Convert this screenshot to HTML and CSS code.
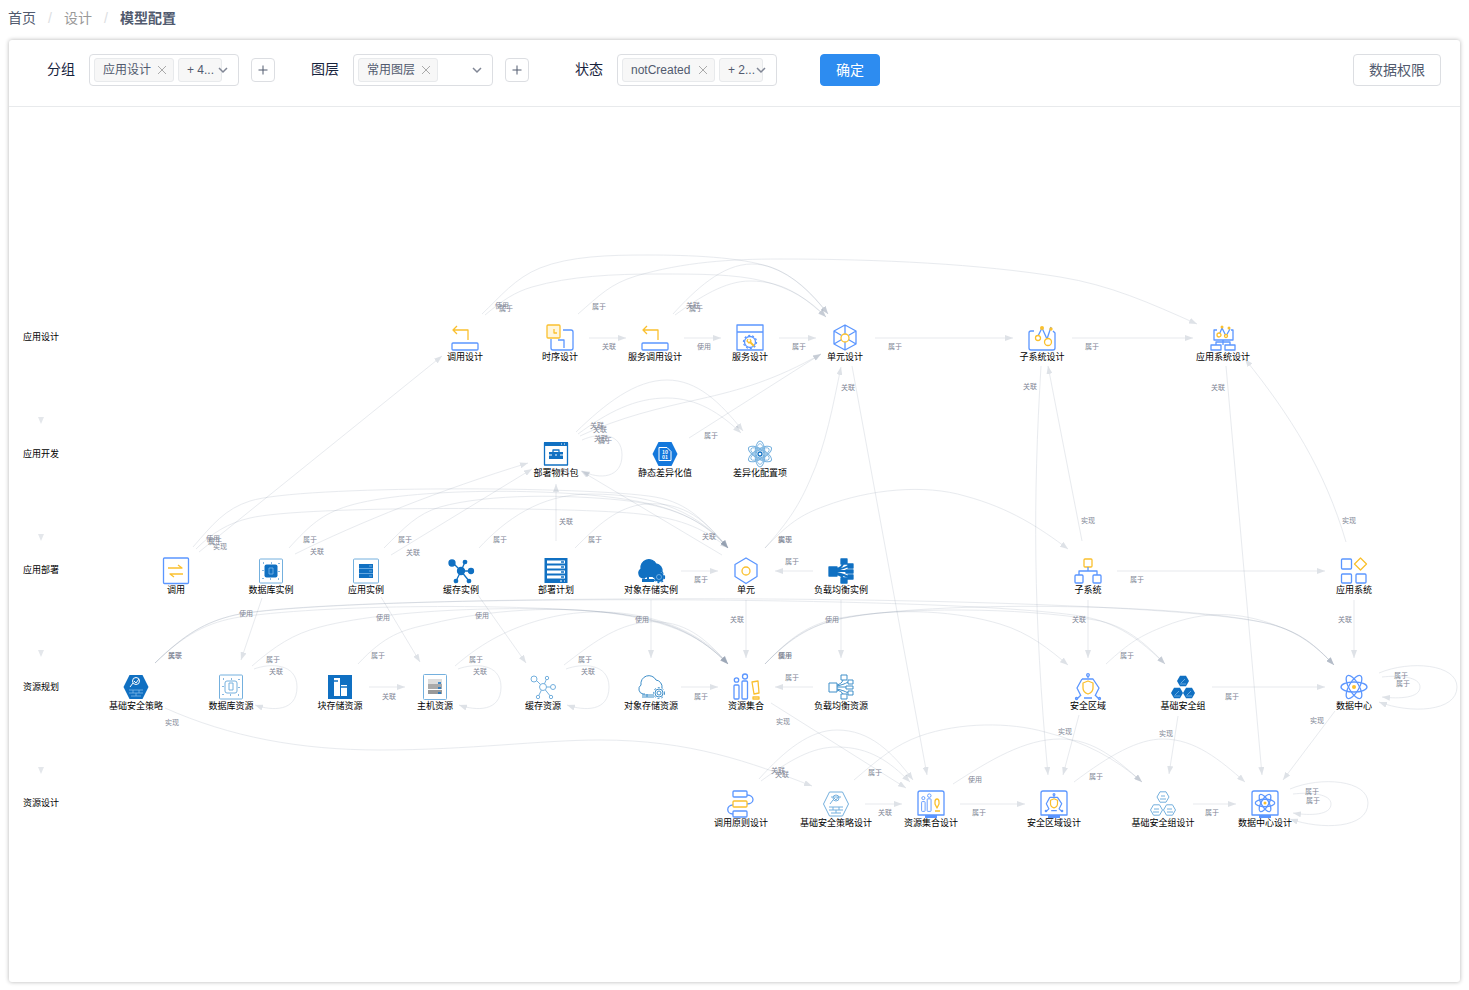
FILE: index.html
```html
<!DOCTYPE html>
<html lang="zh-CN">
<head>
<meta charset="utf-8">
<meta name="viewport" content="width=device-width, initial-scale=1">
<title>模型配置</title>
<link rel="stylesheet" href="styles.css">
</head>
<body>
<nav class="breadcrumb" aria-label="breadcrumb">
  <a href="#home">首页</a><span class="sep">/</span><span class="mid">设计</span><span class="sep">/</span><strong>模型配置</strong>
</nav>
<main class="card">
  <header class="toolbar">
    <div class="field first">
      <span class="field-label" id="l-group">分组</span>
      <div class="select select-group" role="group" aria-labelledby="l-group">
        <span class="tag">应用设计<button class="close" aria-label="移除应用设计"><svg viewBox="0 0 14 14"><path d="M3 3l8 8M11 3l-8 8"/></svg></button></span>
        <span class="tag more">+ 4...</span>
        <button class="toggle" aria-label="展开分组"><svg viewBox="0 0 14 14"><path d="M3 5l4 4 4-4"/></svg></button>
      </div>
      <button class="add" aria-label="添加分组"><svg viewBox="0 0 14 14"><path d="M7 2.500v9M2.500 7h9"/></svg></button>
    </div>
    <div class="field">
      <span class="field-label" id="l-layer">图层</span>
      <div class="select select-layer" role="group" aria-labelledby="l-layer">
        <span class="tag">常用图层<button class="close" aria-label="移除常用图层"><svg viewBox="0 0 14 14"><path d="M3 3l8 8M11 3l-8 8"/></svg></button></span>
        <button class="toggle" aria-label="展开图层"><svg viewBox="0 0 14 14"><path d="M3 5l4 4 4-4"/></svg></button>
      </div>
      <button class="add" aria-label="添加图层"><svg viewBox="0 0 14 14"><path d="M7 2.500v9M2.500 7h9"/></svg></button>
    </div>
    <div class="field last">
      <span class="field-label" id="l-state">状态</span>
      <div class="select select-state" role="group" aria-labelledby="l-state">
        <span class="tag wide">notCreated<button class="close" aria-label="移除notCreated"><svg viewBox="0 0 14 14"><path d="M3 3l8 8M11 3l-8 8"/></svg></button></span>
        <span class="tag more">+ 2...</span>
        <button class="toggle" aria-label="展开状态"><svg viewBox="0 0 14 14"><path d="M3 5l4 4 4-4"/></svg></button>
      </div>
    </div>
    <button class="btn primary">确定</button>
    <button class="btn right">数据权限</button>
  </header>

  <svg class="graph" viewBox="9 107 1451 875" role="img" aria-label="模型关系图">
    <defs>
      <marker id="arrow" markerUnits="userSpaceOnUse" markerWidth="8" markerHeight="6" refX="8" refY="3" orient="auto"><path class="head" d="M0 0L8 3L0 6z"/></marker>
      <path id="hex" d="M-6.500 -12h13L12.500 0L6.500 12h-13L-12.500 0z"/>
      <g id="atom"><ellipse rx="13" ry="5"/><ellipse rx="13" ry="5" transform="rotate(60)"/><ellipse rx="13" ry="5" transform="rotate(120)"/></g>
      <path id="cloud" d="M-6 7h-2a5 5 0 0 1-2-9a8 8 0 0 1 15-5a7 7 0 0 1 6 8"/>
      <g id="net"><path d="M0 0L-8 -8M0 0L4-9M0 0L11 0M0 0L-5 10M0 0L8 10"/><circle r="3.500"/><circle cx="-9" cy="-8" r="3"/><circle cx="4" cy="-9" r="1.700"/><circle cx="10" cy="0" r="2.500"/><circle cx="-5" cy="10" r="1.700"/><circle cx="8" cy="10" r="1.700"/></g>
      <g id="blocks"><path d="M-12-4h8v9h-8zM0-12h6v5H0zM7-7h5v4H7zM7 4h5v4H7zM5-1h7v3H5zM0 7h6v5H0z"/></g>
      <path id="links" d="M-4-2C-1-3 1-4 2-7M-4-1C0-2 4-3 7-5M-4 0H5M-4 2C0 3 4 4 7 6M-4 3C-1 4 1 5 2 7"/>
      <g id="bars"><circle cx="-9.500" cy="-7" r="2.200"/><rect x="-12" y="-2" width="5" height="14" rx="1"/><circle cx="-1" cy="-10.500" r="2.500"/><rect x="-4" y="-6" width="5.500" height="18" rx="1"/></g>
      <g id="shield"><path d="M-6-8h11l6 9-4 8M-7 9l-4-8 5-9M-4 11h8M0-9v-2M-7 8l-4 4M7 8l4 4"/><circle cy="-12" r="1.300"/><circle cx="-11.500" cy="11.500" r="1"/><circle cx="11.500" cy="11.500" r="1"/></g>
      <path id="guard" d="M0-6l5 2v5c0 3-2 5-5 6c-3-1-5-3-5-6v-5z"/>
      <g id="case"><path d="M-13 11v-22a2 2 0 0 1 2-2h22a2 2 0 0 1 2 2v22z"/><path class="stand" d="M-6 12.500h12"/></g>
      <path id="return" d="M3 2v-10h-15m4-4l-4 4 4 4"/>
      <path id="smallhex" d="M-3-5.200h6L6 0L3 5.200h-6L-6 0z"/>
    </defs>

    <g class="edges">
      <path d="M482 314C500 297 515 278 540 268C570 256 610 255 647 255C690 255 740 257 770 267C795 276 812 293 828 314"/>
      <path d="M485 315C503 300 515 292 532 287C570 276 614 274 657 274C700 274 735 274 763 281C790 288 810 300 826 317"/>
      <path d="M578 314C600 295 610 284 636 276C684 262 730 259 780 259C880 259 980 264 1060 277C1110 285 1150 303 1197 324"/>
      <path d="M673 314C695 290 722 264 752 264C780 264 805 285 828 314"/>
      <path d="M675 315C700 297 725 281 750 281C785 281 805 298 826 317"/>
      <path d="M589 338H626"/><path d="M684 338H721"/><path d="M779 338H816"/><path d="M875 338H1013"/><path d="M1072 338H1193"/>
      <path d="M199 552L442 356"/>
      <path d="M765 548C790 520 800 503 810 480C826 445 833 405 841 367"/>
      <path d="M852 366L927 775"/>
      <path d="M1082 541L1048 366"/>
      <path d="M1041 366C1033 500 1033 610 1048 775"/>
      <path d="M1226 366L1262 775"/>
      <path d="M1346 542C1325 470 1290 415 1245 359"/>
      <path d="M576 432C605 404 635 380 667 380C697 380 720 402 743 431"/>
      <path d="M578 434C608 412 635 398 667 398C697 398 720 413 741 433"/>
      <path d="M580 436C620 417 660 408 700 399C740 390 775 380 821 354"/>
      <path d="M689 438L821 354"/>
      <path d="M582 440C600 432 622 433 622 455C622 478 600 480 582 471"/>
      <path d="M295 554C360 522 440 490 528 463"/>
      <path d="M391 555L532 469"/>
      <path d="M556 541V484"/>
      <path d="M722 555L581 471"/>
      <path d="M193 547C213 524 225 509 250 501C300 485 590 486 655 497C690 503 705 523 728 548"/>
      <path d="M196 549C212 533 228 523 250 518C305 505 580 507 640 514C685 519 705 530 728 548"/>
      <path d="M289 548C310 525 322 514 348 506C410 487 560 488 630 500C680 508 705 523 728 548"/>
      <path d="M384 548C405 527 417 514 440 507C490 493 570 495 620 500C670 505 705 520 728 548"/>
      <path d="M479 548C505 520 540 494 590 494C660 494 700 515 728 548"/>
      <path d="M575 548C598 525 617 507 645 504C685 501 707 522 728 548"/>
      <path d="M681 571H718"/><path d="M813 571H775"/><path d="M1117 571H1325"/>
      <path d="M765 548C788 524 800 515 825 506C870 489 925 484 965 496C1010 508 1040 528 1068 549"/>
      <path d="M262 598L241 660"/><path d="M381 597L420 662"/><path d="M478 595L526 663"/>
      <path d="M651 600V658"/><path d="M746 600V658"/><path d="M841 600V658"/><path d="M1088 600V658"/><path d="M1354 600V658"/>
      <path d="M155 663C185 634 208 622 240 617C340 603 540 604 620 614C675 621 702 638 728 664"/>
      <path d="M155 663C185 634 205 622 235 615C330 594 950 595 1080 616C1118 622 1140 640 1165 664"/>
      <path d="M155 663C185 634 205 622 235 615C350 592 1140 592 1270 624C1300 632 1315 645 1334 665"/>
      <path d="M765 664C790 638 815 622 850 617C950 600 1190 604 1270 624C1300 632 1315 645 1334 665"/>
      <path d="M765 664C790 638 808 624 840 618C900 607 1020 607 1095 620C1125 625 1145 643 1165 664"/>
      <path d="M765 664C790 638 808 626 840 619C900 606 960 612 1000 624C1030 633 1050 650 1068 665"/>
      <path d="M252 666C275 646 293 634 320 627C400 606 560 605 620 614C675 622 702 638 728 664"/>
      <path d="M358 664C385 635 402 630 430 624C490 609 560 606 610 613C675 622 702 638 728 664"/>
      <path d="M455 666C485 640 512 628 540 620C610 600 690 618 728 664"/>
      <path d="M564 665C590 645 615 625 647 622C685 619 707 640 728 664"/>
      <path d="M254 669C270 663 297 663 297 687C297 712 272 711 255 705"/>
      <path d="M458 669C474 663 501 663 501 687C501 712 476 711 459 705"/>
      <path d="M566 669C582 663 609 663 609 687C609 712 584 711 567 705"/>
      <path d="M1106 664C1130 642 1140 636 1165 626C1205 610 1240 612 1275 625C1300 634 1315 645 1334 665"/>
      <path d="M1379 673C1410 660 1457 664 1457 687C1457 712 1410 714 1379 702"/>
      <path d="M1382 677C1400 675 1420 677 1420 687C1420 698 1400 699 1382 697"/>
      <path d="M369 687H405"/><path d="M681 687H718"/><path d="M813 687H775"/><path d="M1212 687H1325"/>
      <path d="M165 708C230 737 300 750 380 750C470 750 540 740 600 740C690 740 750 762 812 786"/>
      <path d="M771 703L906 788"/><path d="M1079 715L1063 775"/><path d="M1178 716L1169 774"/><path d="M1335 711L1283 780"/>
      <path d="M759 779C785 750 810 730 837 730C870 730 892 752 913 780"/>
      <path d="M761 781C790 760 812 747 837 747C870 747 890 762 910 782"/>
      <path d="M854 780C880 758 895 745 920 736C960 722 1010 722 1045 732C1085 742 1115 758 1142 782"/>
      <path d="M953 784C990 760 1025 739 1060 739C1095 739 1118 761 1142 782"/>
      <path d="M1074 782C1110 755 1138 739 1163 739C1195 739 1220 760 1245 782"/>
      <path d="M865 804H902"/><path d="M960 804H1025"/><path d="M1193 804H1236"/>
      <path d="M1290 789C1321 776 1368 780 1368 803C1368 829 1321 830 1290 819"/>
      <path d="M1293 794C1311 792 1331 794 1331 804C1331 815 1311 816 1293 813"/>
    </g>
    <g class="rank-arrows"><path d="M38 417h6l-3 7z"/><path d="M38 534h6l-3 7z"/><path d="M38 650h6l-3 7z"/><path d="M38 767h6l-3 7z"/></g>

    <g class="edge-labels">
      <text x="502" y="308">使用</text><text x="506" y="311">属于</text><text x="599" y="309">属于</text><text x="693" y="308">关联</text><text x="696" y="311">属于</text>
      <text x="609" y="349">关联</text><text x="704" y="349">使用</text><text x="799" y="349">属于</text><text x="895" y="349">属于</text><text x="1092" y="349">属于</text>
      <text x="848" y="390">关联</text><text x="1030" y="389">关联</text><text x="1218" y="390">关联</text>
      <text x="597" y="428">关联</text><text x="600" y="432">关联</text><text x="601" y="441">关联</text><text x="605" y="443">属于</text><text x="711" y="438">属于</text>
      <text x="213" y="541">使用</text><text x="215" y="544">属于</text><text x="220" y="549">实现</text><text x="310" y="542">属于</text><text x="317" y="554">关联</text><text x="405" y="542">属于</text><text x="413" y="555">关联</text><text x="500" y="542">属于</text><text x="566" y="524">关联</text><text x="595" y="542">属于</text><text x="709" y="539">关联</text><text x="701" y="582">属于</text><text x="792" y="564">属于</text><text x="785" y="542">实现</text><text x="785" y="542">属于</text><text x="1088" y="523">实现</text><text x="1349" y="523">实现</text><text x="1137" y="582">属于</text>
      <text x="246" y="616">使用</text><text x="383" y="620">使用</text><text x="482" y="618">使用</text><text x="642" y="622">使用</text><text x="737" y="622">关联</text><text x="832" y="622">使用</text><text x="1079" y="622">关联</text><text x="1345" y="622">关联</text>
      <text x="175" y="658">属于</text><text x="175" y="658">关联</text><text x="273" y="662">属于</text><text x="276" y="674">关联</text><text x="378" y="658">属于</text><text x="389" y="699">关联</text><text x="476" y="662">属于</text><text x="480" y="674">关联</text><text x="585" y="662">属于</text><text x="588" y="674">关联</text><text x="701" y="699">属于</text><text x="785" y="658">使用</text><text x="785" y="658">属于</text><text x="792" y="680">属于</text><text x="1127" y="658">属于</text><text x="1232" y="699">属于</text><text x="1401" y="678">属于</text><text x="1403" y="686">属于</text>
      <text x="172" y="725">实现</text><text x="783" y="724">实现</text><text x="1065" y="734">实现</text><text x="1166" y="736">实现</text><text x="1317" y="723">实现</text>
      <text x="778" y="773">关联</text><text x="782" y="777">关联</text><text x="875" y="775">属于</text><text x="885" y="815">关联</text><text x="975" y="782">使用</text><text x="979" y="815">属于</text><text x="1096" y="779">属于</text><text x="1212" y="815">属于</text><text x="1312" y="794">属于</text><text x="1313" y="803">属于</text>
    </g>

    <g class="labels">
      <text x="41" y="340">应用设计</text><text x="41" y="457">应用开发</text><text x="41" y="573">应用部署</text><text x="41" y="690">资源规划</text><text x="41" y="806">资源设计</text>
    </g>

    <g class="nodes">
      <g transform="translate(465 338)"><use href="#return" class="y"/><rect class="b" x="-13" y="5" width="26" height="7" rx="1"/><text y="22">调用设计</text></g>
      <g transform="translate(560 338)"><path class="b" d="M3-8h8a2 2 0 0 1 2 2v16a2 2 0 0 1-2 2h-18a2 2 0 0 1-2-2v-9M-2 2h6v8"/><rect class="y pale" x="-13" y="-13" width="13" height="13" rx="1"/><path class="y" d="M-6-9v4h3"/><text y="22">时序设计</text></g>
      <g transform="translate(655 338)"><use href="#return" class="y"/><rect class="b" x="-13" y="5" width="26" height="7" rx="1"/><text y="22">服务调用设计</text></g>
      <g transform="translate(750 338)"><path class="b" d="M-13-13h26v25h-26zM-13-6h26"/><circle class="b" cy="4" r="5.500"/><circle class="b gear" cy="4" r="6.500"/><path class="y thick" d="M0 4l4 4"/><path class="y" d="M-2 1l-1 2 2 2 2-2-1-2"/><text y="22">服务设计</text></g>
      <g transform="translate(845 338)"><path class="b" d="M0-13l11 6v13l-11 6-11-6v-13zM0-13v25M-11-7l22 13M11-7l-22 13"/><circle class="y white" r="4"/><text y="22">单元设计</text></g>
      <g transform="translate(1042 338)"><path class="b" d="M-8-7h-3a2 2 0 0 0-2 2v15a2 2 0 0 0 2 2h22a2 2 0 0 0 2-2v-15l-2-2M-4-2l4-8 5 11 4-12"/><circle class="y white" cx="-4" cy="0" r="2.500"/><circle class="y white" cx="6" cy="4" r="3.500"/><circle class="yf" cx="0" cy="-10" r="2"/><circle class="yf" cx="9" cy="-9" r="1.700"/><text y="22">子系统设计</text></g>
      <g transform="translate(1223 338)"><path class="b" d="M-6-8h-3v10h19v-10h-2M0 2v5M-7 7v-3h14v3M-12 7h10v5h-10zM2 7h10v5H2zM-4-3l3-7 4 8 4-7"/><circle class="y white" cx="-4" cy="-3" r="2"/><circle class="y white" cx="3" cy="-2" r="1.500"/><circle class="yf" cx="-1" cy="-11" r="1.500"/><circle class="yf" cx="6" cy="-10" r="1.500"/><text y="22">应用系统设计</text></g>

      <g transform="translate(556 454)"><rect class="d" x="-11.500" y="-11" width="23" height="22"/><path class="df" d="M-12-12h24v4h-24zM-7-2h14v7h-14z"/><path class="d" d="M-3-2v-2h6v2"/><path class="w" d="M-7 1h3M-1 1h2M4 1h3M5-10h1M8-10h1"/><text y="22">部署物料包</text></g>
      <g transform="translate(665 454)"><use href="#hex" class="bf"/><path class="w" d="M-6-6.500h8l4 4v9h-12z"/><g class="bits"><text y="0">10</text><text y="5">01</text></g><text y="22">静态差异化值</text></g>
      <g transform="translate(760 454)"><g transform="rotate(30)"><use href="#atom" class="l"/></g><g transform="rotate(30) scale(.8)"><use href="#atom" class="l"/></g><circle class="l white" r="4"/><circle class="d" r="2"/><text y="22">差异化配置项</text></g>

      <g transform="translate(176 571)"><rect class="b" x="-12.500" y="-13" width="25" height="25.500" rx="1"/><path class="y" d="M-8-3h14l-4-3M7 3h-13l4 3"/><text y="22">调用</text></g>
      <g transform="translate(271 571)"><rect class="l" x="-11.500" y="-12" width="23" height="24" rx="1"/><rect class="df" x="-6.500" y="-6.500" width="13" height="13" rx="2"/><rect class="dots" x="-8" y="-8" width="16" height="16"/><rect class="pale-line" x="-2" y="-3" width="4" height="6"/><text y="22">数据库实例</text></g>
      <g transform="translate(366 571)"><rect class="l" x="-12.500" y="-12" width="25" height="24" rx="1"/><path class="df" d="M-7-7H7v14H-7z"/><path class="pale-line" d="M-7-2.500H7M-7 2.500H7M3-5h3M3 0h3M3 5h3"/><text y="22">应用实例</text></g>
      <g transform="translate(461 571)"><use href="#net" class="d solid"/><text y="22">缓存实例</text></g>
      <g transform="translate(556 571)"><path class="df" d="M-11.500-13h23v25h-23z"/><path class="w2" d="M-9-9h18M-9-4h18M-9 1h18M-9 6h18"/><path class="w" d="M4 10h2M8 10h1"/><path class="d" d="M5-9h3M5-4h3M5 1h3M5 6h3"/><text y="22">部署计划</text></g>
      <g transform="translate(651 571)"><use href="#cloud" class="d solid"/><path class="df" d="M-7 0h14v6h-14zM-9 8h12v3h-12zM-4 5h2v6h-2z"/><circle class="df" cx="8" cy="6" r="5"/><circle class="d gear" cx="8" cy="6" r="5.500"/><circle class="pale-line" cx="8" cy="6" r="2.500"/><text y="22">对象存储实例</text></g>
      <g transform="translate(746 571)"><path class="b" d="M0-13l11 6.500v12L0 12.500-11 5.500v-12z"/><circle class="y" r="4"/><text y="22">单元</text></g>
      <g transform="translate(841 571)"><use href="#blocks" class="d solid"/><use href="#links" class="d links-solid"/><text y="22">负载均衡实例</text></g>
      <g transform="translate(1088 571)"><rect class="y" x="-4" y="-12" width="8" height="8" rx="1"/><g class="b"><path d="M0-4v4M-9 4v-4h18v4"/><rect x="-13" y="4" width="8" height="8" rx="1"/><rect x="5" y="4" width="8" height="8" rx="1"/></g><text y="22">子系统</text></g>
      <g transform="translate(1354 571)"><g class="b"><rect x="-12.500" y="-12" width="10" height="10" rx="1"/><rect x="-12.500" y="3" width="10" height="9" rx="1"/><rect x="2" y="3" width="10" height="9" rx="1"/></g><path class="y" d="M6.500-13l6 6-6 6-6-6z"/><text y="22">应用系统</text></g>

      <g transform="translate(136 687)"><use href="#hex" class="df"/><circle class="w" cx="0" cy="-6" r="3.500"/><path class="w" d="M-3-4l-3 4M-2-6l2 2 3-4"/><path class="pale-line" d="M-7 3h14M-7 6h14M-5 9h10M-3 3v3M3 3v3M0 6v3"/><text y="22">基础安全策略</text></g>
      <g transform="translate(231 687)"><rect class="l" x="-11.500" y="-12" width="23" height="24" rx="1"/><rect class="l" x="-6" y="-6" width="12" height="12" rx="2"/><rect class="dots" x="-8" y="-8" width="16" height="16"/><rect class="l" x="-2" y="-4" width="4" height="7"/><text y="22">数据库资源</text></g>
      <g transform="translate(340 687)"><path class="df" d="M-12-12h24v24h-24z"/><path class="wf" d="M-6-9h6v18h-6zM1-2h6v11H1z"/><path class="d" d="M-6-6h4M1 0h6"/><text y="22">块存储资源</text></g>
      <g transform="translate(435 687)"><rect class="l" x="-11.500" y="-12.500" width="23" height="25" rx="1"/><path class="g1" d="M-7-8H7v5H-7z"/><path class="g2" d="M-7-3H7v5H-7z"/><path class="g3" d="M-7 3H7v4H-7z"/><path class="d" d="M3-4h3M3 1h3M3 6h3"/><text y="22">主机资源</text></g>
      <g transform="translate(543 687)"><use href="#net" class="l white"/><text y="22">缓存资源</text></g>
      <g transform="translate(651 687)"><use href="#cloud" class="m"/><path class="m" d="M-9 8h12M-9 10h12M-4 7v3"/><circle class="m white" cx="8" cy="6" r="4"/><circle class="m gear" cx="8" cy="6" r="5.500"/><circle class="m" cx="8" cy="6" r="2"/><text y="22">对象存储资源</text></g>
      <g transform="translate(746 687)"><use href="#bars" class="b"/><path class="y" d="M6-5l6-1 1 12-5 1zM7 10h6v2H7z"/><text y="22">资源集合</text></g>
      <g transform="translate(841 687)"><use href="#blocks" class="m"/><use href="#links" class="m"/><text y="22">负载均衡资源</text></g>
      <g transform="translate(1088 687)"><use href="#shield" class="b"/><use href="#guard" class="y"/><text y="22">安全区域</text></g>
      <g transform="translate(1183 687)"><g class="df"><use href="#smallhex" y="-6"/><use href="#smallhex" x="-6" y="6"/><use href="#smallhex" x="6" y="6"/></g><path class="pale-line" d="M-2-4l4-4M-3-3h6M-8 8l4-4M-9 9h6M4 8l4-4M3 9h6"/><text y="22">基础安全组</text></g>
      <g transform="translate(1354 687)"><use href="#atom" class="b"/><circle class="yf" r="2"/><text y="22">数据中心</text></g>

      <g transform="translate(741 804)"><g class="b"><rect x="-8" y="-13" width="14" height="6" rx="1"/><rect x="-8" y="7" width="14" height="6" rx="1"/><path d="M6-9c8 0 8 9 0 9M-8 1c-7 0-7 9 0 9"/></g><rect class="y" x="-8" y="-3" width="14" height="6" rx="1"/><text y="22">调用原则设计</text></g>
      <g transform="translate(836 804)"><use href="#hex" class="l"/><circle class="l" cy="-6" r="3"/><path class="l" d="M-3-4l-3 4M-2-6l2 2 3-4M-7 3H7M-7 6H7M-5 9H5M-3 3v3M3 3v3M0 6v3M-5-7h10"/><text y="22">基础安全策略设计</text></g>
      <g transform="translate(931 804)"><use href="#case" class="b"/><g transform="translate(-1 -1) scale(.7)"><use href="#bars" class="b"/></g><path class="y" d="M4-2c0-4 4-4 4 0v2l-2 4-2-4zM4 7h5"/><text y="22">资源集合设计</text></g>
      <g transform="translate(1054 804)"><use href="#case" class="b"/><g transform="translate(0 -1) scale(.7)"><use href="#shield" class="b bold"/><use href="#guard" class="y bold"/></g><text y="22">安全区域设计</text></g>
      <g transform="translate(1163 804)"><g class="l"><use href="#smallhex" y="-7"/><use href="#smallhex" x="-6.500" y="6"/><use href="#smallhex" x="6.500" y="6"/><path d="M-3-5h6M-2-8h4M-10 8h6M-9 5h5M4 8h6M4 5h5"/></g><text y="22">基础安全组设计</text></g>
      <g transform="translate(1265 804)"><use href="#case" class="b"/><g transform="translate(0 -1) scale(.75)"><use href="#atom" class="b bold"/></g><circle class="yf" cy="-1" r="1.500"/><text y="22">数据中心设计</text></g>
    </g>
  </svg>
</main>
</body>
</html>
```
FILE: styles.css
```css
* { box-sizing: border-box; }
body {
  margin: 0;
  padding: 8px;
  background: #fff;
  color: #17233d;
  font: 14px/20px "Liberation Sans", "Noto Sans CJK SC", sans-serif;
}
button { font: inherit; color: #515a6e; cursor: pointer; }
button svg { display: block; width: 14px; height: 14px; fill: none; stroke: currentColor; }

.breadcrumb { display: flex; color: #515a6e; margin-bottom: 12px; }
.breadcrumb a { color: inherit; text-decoration: none; }
.breadcrumb .mid { color: #999; }
.breadcrumb .sep { width: 28px; text-align: center; color: #dcdee2; }

.card { margin: 0 1px; background: #fff; border-radius: 3px; box-shadow: 0 0 4px rgba(0, 0, 0, .3); }
.toolbar {
  display: flex;
  align-items: center;
  padding: 14px 19px 20px 38px;
  border-bottom: 1px solid #e8eaec;
}
.field { display: flex; align-items: center; margin-right: 36px; }
.field-label { margin-right: 14px; padding-bottom: 2px; }
.field + .field { margin-right: 46px; }
.field + .field.last { margin-right: 43px; }
.select {
  position: relative;
  display: flex;
  align-items: center;
  gap: 4px;
  height: 32px;
  padding: 0 4px;
  border: 1px solid #dcdee2;
  border-radius: 4px;
}
.select-group { width: 150px; }
.select-layer { width: 140px; }
.select-state { width: 160px; }
.tag {
  display: flex;
  align-items: center;
  height: 24px;
  padding: 0 4px 0 8px;
  border: 1px solid #e8eaec;
  border-radius: 3px;
  background: #f7f7f7;
  color: #515a6e;
  font-size: 12px;
  white-space: nowrap;
}
.tag.more { width: 44px; }
.tag.wide { width: 93px; justify-content: space-between; }
.close { margin: 0 0 0 4px; padding: 0; border: 0; background: none; color: #aaa; }
.toggle { position: absolute; right: 8px; top: 8px; padding: 0; border: 0; background: none; color: #808695; }
.toggle svg { stroke-width: 1.5; }
.add {
  display: grid;
  place-items: center;
  width: 24px;
  height: 24px;
  margin-left: 12px;
  padding: 0;
  border: 1px solid #dcdee2;
  border-radius: 4px;
  background: #fff;
}
.btn { height: 32px; padding: 0 15px; border: 1px solid #dcdee2; border-radius: 4px; background: #fff; }
.btn.primary { border-color: #2d8cf0; background: #2d8cf0; color: #fff; }
.btn.right { margin-left: auto; }

.graph { display: block; width: 100%; height: auto; font-family: "Noto Sans CJK SC", sans-serif; }
.edges path { fill: none; stroke: #808ea3; stroke-width: .7; opacity: .25; marker-end: url(#arrow); }
.edges path:hover { opacity: 1; }
marker .head { fill: #808ea3; stroke: none; }
.rank-arrows { fill: #e4e7eb; }
.graph text { text-anchor: middle; stroke: none; fill: #000; font-size: 9px; }
.graph .edge-labels text { fill: #808695; font-size: 7px; }
.graph .bits text { fill: #fff; font-size: 5px; font-weight: bold; }
.b, .y, .d, .l, .m, .w, .w2, .pale-line { fill: none; stroke-width: 1.3; stroke-linejoin: round; }
.b { stroke: #5b96ff; }
.y { stroke: #fac02e; }
.d { stroke: #1070c2; }
.l { stroke: #74b0de; stroke-width: 1; }
.m { stroke: #3f8fc9; stroke-width: 1; }
.w { stroke: #fff; stroke-width: 1; }
.w2 { stroke: #fff; stroke-width: 3; }
.pale-line { stroke: #8cc2ef; stroke-width: .7; }
.thick { stroke-width: 2; }
.bold { stroke-width: 1.7; }
.stand { stroke-width: 3; }
.links-solid { stroke-width: 2; }
.white { fill: #fff; }
.pale { fill: #fff6dc; }
.solid, .df { fill: #1070c2; }
.bf { fill: #1478dc; }
.yf { fill: #fac02e; }
.wf { fill: #fff; }
.gear { stroke-dasharray: 2 2; }
.dots { fill: none; stroke: #1070c2; stroke-dasharray: 1 7; }
.g1 { fill: #ddd; }
.g2 { fill: #aaa; }
.g3 { fill: #999; }
```
